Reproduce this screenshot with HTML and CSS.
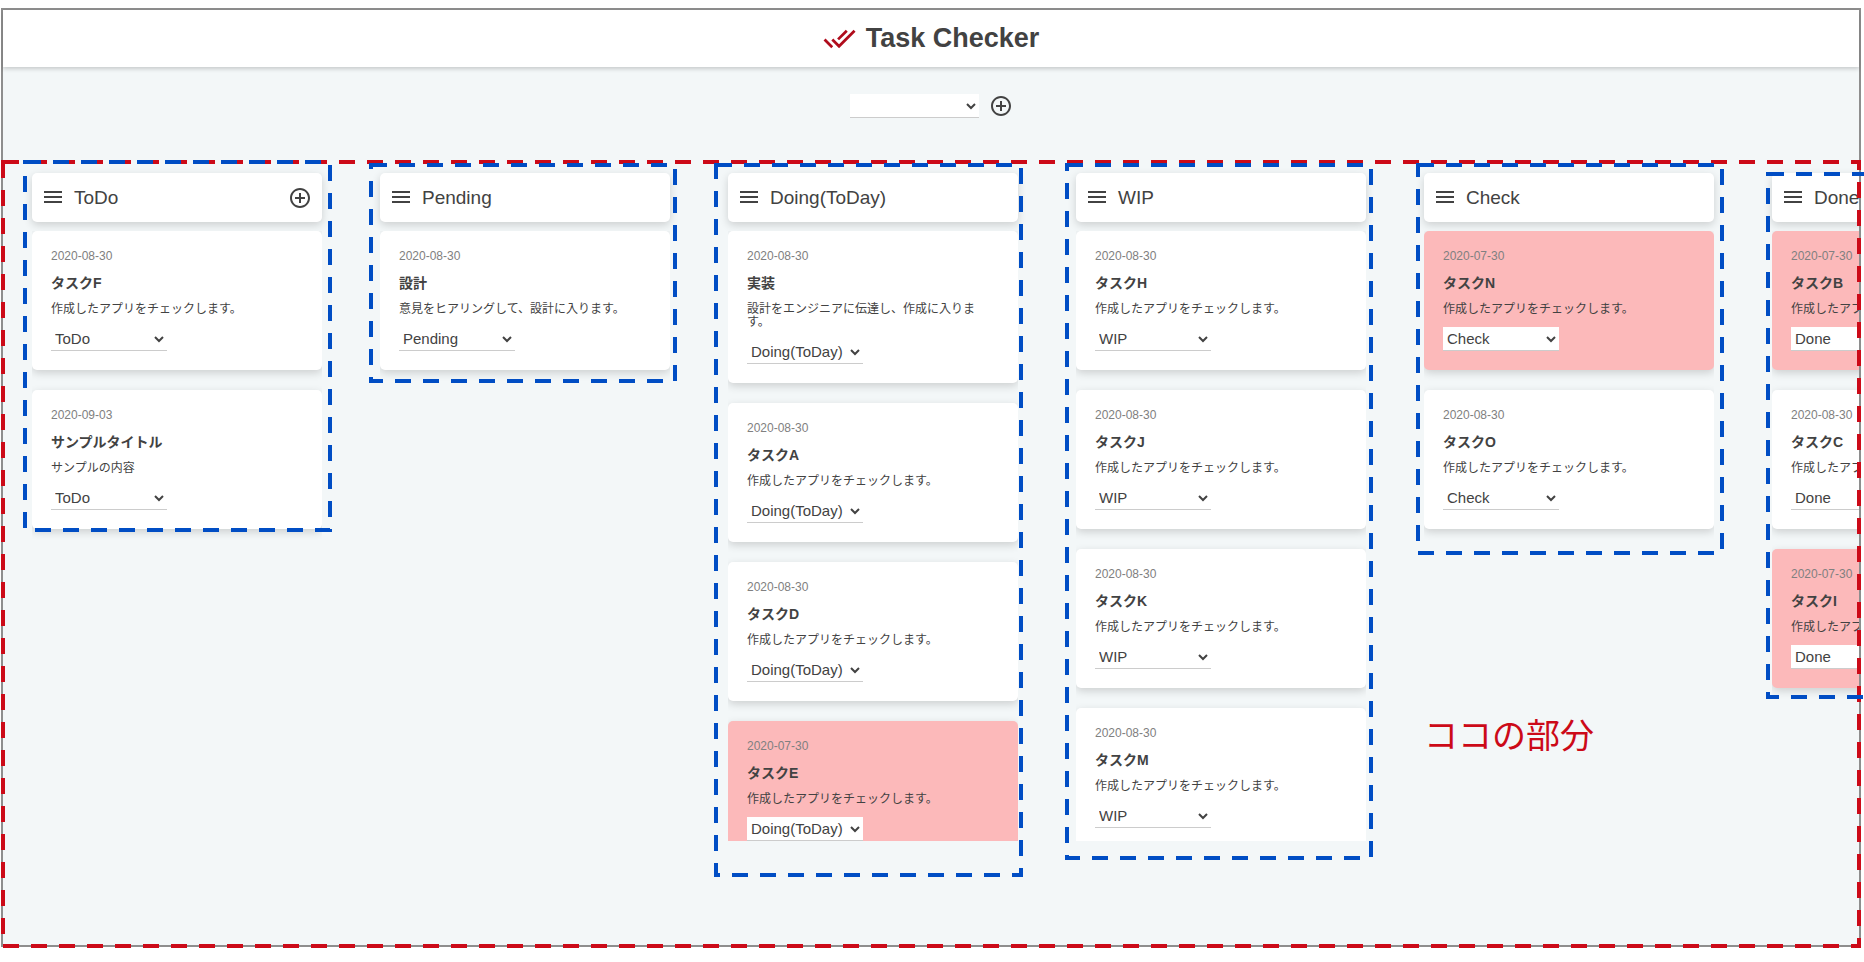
FILE: index.html
```html
<!DOCTYPE html>
<html lang="ja">
<head>
<meta charset="utf-8">
<title>Task Checker</title>
<link rel="stylesheet" href="styles.css">
</head>
<body>
<svg class="defs" aria-hidden="true">
  <symbol id="icon-menu" viewBox="0 0 18 15"><path d="M0 2h18M0 7h18M0 12h18" fill="none" stroke="currentColor" stroke-width="1.8"/></symbol>
  <symbol id="icon-add" viewBox="0 0 24 24"><path fill="currentColor" d="M13 7h-2v4H7v2h4v4h2v-4h4v-2h-4V7zm-1-5C6.48 2 2 6.48 2 12s4.48 10 10 10 10-4.480 10-10S17.520 2 12 2zm0 18c-4.410 0-8-3.590-8-8s3.590-8 8-8 8 3.590 8 8-3.590 8-8 8z"/></symbol>
</svg>
<div class="app">
  <header class="header">
    <svg class="logo" viewBox="0 0 24 24" aria-hidden="true"><path fill="currentColor" d="M18 7l-1.410-1.410-6.340 6.340 1.410 1.410L18 7zm4.240-1.410L11.660 16.170 7.480 12l-1.410 1.410L11.660 19l12-12-1.420-1.410zM.410 13.410L6 19l1.410-1.410L1.830 12 .410 13.410z"/></svg>
    <h1 class="title">Task Checker</h1>
  </header>

  <div class="toolbar">
    <select class="select select-board" aria-label="ボード"><option></option></select>
    <button class="icon-button" type="button" aria-label="ボードを追加"><svg class="icon-add"><use href="#icon-add"/></svg></button>
  </div>

  <main class="board">
    <section class="column">
      <div class="column-header">
        <svg class="icon-menu"><use href="#icon-menu"/></svg>
        <h2 class="column-title">ToDo</h2>
        <button class="icon-button" type="button" aria-label="タスクを追加"><svg class="icon-add"><use href="#icon-add"/></svg></button>
      </div>
      <div class="list">
        <article class="card"><time class="date">2020-08-30</time><h3 class="name">タスクF</h3><p class="text">作成したアプリをチェックします。</p><select class="select" aria-label="ステータス"><option>ToDo</option></select></article>
        <article class="card"><time class="date">2020-09-03</time><h3 class="name">サンプルタイトル</h3><p class="text">サンプルの内容</p><select class="select" aria-label="ステータス"><option>ToDo</option></select></article>
      </div>
    </section>

    <section class="column">
      <div class="column-header">
        <svg class="icon-menu"><use href="#icon-menu"/></svg>
        <h2 class="column-title">Pending</h2>
      </div>
      <div class="list">
        <article class="card"><time class="date">2020-08-30</time><h3 class="name">設計</h3><p class="text">意見をヒアリングして、設計に入ります。</p><select class="select" aria-label="ステータス"><option>Pending</option></select></article>
      </div>
    </section>

    <section class="column">
      <div class="column-header">
        <svg class="icon-menu"><use href="#icon-menu"/></svg>
        <h2 class="column-title">Doing(ToDay)</h2>
      </div>
      <div class="list">
        <article class="card"><time class="date">2020-08-30</time><h3 class="name">実装</h3><p class="text">設計をエンジニアに伝達し、作成に入ります。</p><select class="select" aria-label="ステータス"><option>Doing(ToDay)</option></select></article>
        <article class="card"><time class="date">2020-08-30</time><h3 class="name">タスクA</h3><p class="text">作成したアプリをチェックします。</p><select class="select" aria-label="ステータス"><option>Doing(ToDay)</option></select></article>
        <article class="card"><time class="date">2020-08-30</time><h3 class="name">タスクD</h3><p class="text">作成したアプリをチェックします。</p><select class="select" aria-label="ステータス"><option>Doing(ToDay)</option></select></article>
        <article class="card card-overdue"><time class="date">2020-07-30</time><h3 class="name">タスクE</h3><p class="text">作成したアプリをチェックします。</p><select class="select" aria-label="ステータス"><option>Doing(ToDay)</option></select></article>
      </div>
    </section>

    <section class="column">
      <div class="column-header">
        <svg class="icon-menu"><use href="#icon-menu"/></svg>
        <h2 class="column-title">WIP</h2>
      </div>
      <div class="list">
        <article class="card"><time class="date">2020-08-30</time><h3 class="name">タスクH</h3><p class="text">作成したアプリをチェックします。</p><select class="select" aria-label="ステータス"><option>WIP</option></select></article>
        <article class="card"><time class="date">2020-08-30</time><h3 class="name">タスクJ</h3><p class="text">作成したアプリをチェックします。</p><select class="select" aria-label="ステータス"><option>WIP</option></select></article>
        <article class="card"><time class="date">2020-08-30</time><h3 class="name">タスクK</h3><p class="text">作成したアプリをチェックします。</p><select class="select" aria-label="ステータス"><option>WIP</option></select></article>
        <article class="card"><time class="date">2020-08-30</time><h3 class="name">タスクM</h3><p class="text">作成したアプリをチェックします。</p><select class="select" aria-label="ステータス"><option>WIP</option></select></article>
      </div>
    </section>

    <section class="column">
      <div class="column-header">
        <svg class="icon-menu"><use href="#icon-menu"/></svg>
        <h2 class="column-title">Check</h2>
      </div>
      <div class="list">
        <article class="card card-overdue"><time class="date">2020-07-30</time><h3 class="name">タスクN</h3><p class="text">作成したアプリをチェックします。</p><select class="select" aria-label="ステータス"><option>Check</option></select></article>
        <article class="card"><time class="date">2020-08-30</time><h3 class="name">タスクO</h3><p class="text">作成したアプリをチェックします。</p><select class="select" aria-label="ステータス"><option>Check</option></select></article>
      </div>
    </section>

    <section class="column">
      <div class="column-header">
        <svg class="icon-menu"><use href="#icon-menu"/></svg>
        <h2 class="column-title">Done</h2>
      </div>
      <div class="list">
        <article class="card card-overdue"><time class="date">2020-07-30</time><h3 class="name">タスクB</h3><p class="text">作成したアプリをチェックします。</p><select class="select" aria-label="ステータス"><option>Done</option></select></article>
        <article class="card"><time class="date">2020-08-30</time><h3 class="name">タスクC</h3><p class="text">作成したアプリをチェックします。</p><select class="select" aria-label="ステータス"><option>Done</option></select></article>
        <article class="card card-overdue"><time class="date">2020-07-30</time><h3 class="name">タスクI</h3><p class="text">作成したアプリをチェックします。</p><select class="select" aria-label="ステータス"><option>Done</option></select></article>
      </div>
    </section>
  </main>
</div>

<!-- Annotations: red marks the whole board, blue marks each column -->
<svg class="marks">
  <rect class="mark-board" x="3" y="162" width="1856" height="784"/>
  <g class="mark-column">
    <rect x="25" y="162" width="305" height="368"/>
    <rect x="371" y="165" width="304" height="216"/>
    <rect x="716" y="165" width="305" height="710"/>
    <rect x="1067" y="165" width="304" height="693"/>
    <rect x="1418" y="165" width="304" height="388"/>
    <rect x="1768" y="174" width="304" height="523"/>
  </g>
  <text class="mark-text" x="1424" y="748">ココの部分</text>
</svg>
</body>
</html>
```
FILE: styles.css
```css
* { box-sizing: border-box; }

body {
  margin: 8px 3px 15px 1px;
  background: #fff;
  color: #424242;
  font-family: "Liberation Sans", "Noto Sans CJK JP", sans-serif;
}

h1, h2, h3, p { margin: 0; }

.defs { display: none; }

.app {
  display: flex;
  flex-direction: column;
  min-height: calc(100vh - 23px);
  border: 2px solid #8e8e8e;
  background: #f3f7f8;
}

.header {
  display: flex;
  align-items: center;
  justify-content: center;
  gap: 10px;
  height: 57px;
  background: #fff;
  box-shadow: 0 2px 4px rgba(0, 0, 0, 0.18);
}

.logo {
  width: 33px;
  height: 33px;
  color: #b00c1c;
}

.title {
  font-size: 27px;
  line-height: 32px;
  padding-bottom: 2px;
}

.toolbar {
  display: flex;
  align-items: center;
  justify-content: center;
  gap: 10px;
  padding-top: 27px;
}

.icon-button {
  display: flex;
  padding: 0;
  border: 0;
  background: none;
  color: #424242;
}

.icon-add {
  width: 24px;
  height: 24px;
}

.icon-menu {
  width: 18px;
  height: 15px;
  flex: none;
}

.select {
  display: block;
  width: 116px;
  height: 24px;
  padding: 0;
  border: 0;
  border-bottom: 1px solid #ccc;
  border-radius: 0;
  background: #fff;
  color: #424242;
  font-family: inherit;
  font-size: 15px;
}

.select-board { width: 129px; }

.board {
  display: flex;
  flex: 1;
  align-items: flex-start;
  gap: 58px;
  padding: 55px 29px 0;
  overflow: hidden;
}

.column {
  flex: none;
  width: 290px;
}

.column-header {
  display: flex;
  align-items: center;
  gap: 12px;
  height: 49px;
  padding: 0 10px 0 12px;
  border-radius: 5px;
  background: #fff;
  box-shadow: 0 3px 8px rgba(0, 0, 0, 0.16);
}

.column-title {
  flex: 1;
  font-size: 19px;
  font-weight: 400;
  line-height: 24px;
}

.list {
  display: flex;
  flex-direction: column;
  gap: 20px;
  max-height: calc(100vh - 352px);
  margin-top: 9px;
  padding-bottom: 20px;
  overflow: auto;
  scrollbar-width: none;
}

.card {
  flex: none;
  padding: 19px;
  border-radius: 5px;
  background: #fff;
  box-shadow: 0 3px 8px rgba(0, 0, 0, 0.16);
}

.card-overdue { background: #fcb9ba; }

.date {
  display: block;
  color: #808080;
  font-size: 12px;
  line-height: 12px;
}

.name {
  margin-top: 12px;
  font-size: 14px;
  line-height: 18px;
}

.text {
  max-width: 95%;
  margin: 11px 0;
  font-size: 12px;
  line-height: 13px;
}

.marks {
  position: absolute;
  inset: 0;
  width: 100%;
  height: 100%;
  overflow: hidden;
  pointer-events: none;
}

.mark-board,
.mark-column {
  fill: none;
  stroke: #cc0a18;
  stroke-width: 4px;
  stroke-dasharray: 16 12;
}

.mark-column { stroke: #004dc4; }

.mark-text {
  fill: #cc0a18;
  font-family: "Noto Sans CJK JP", sans-serif;
  font-size: 34px;
  font-weight: 400;
}
```
